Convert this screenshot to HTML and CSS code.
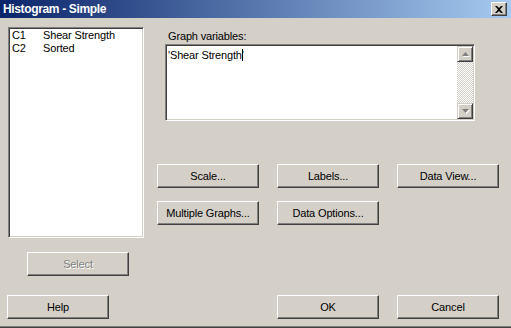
FILE: index.html
```html
<!DOCTYPE html>
<html>
    <head>
        <meta charset="utf-8">
        <title>Histogram - Simple</title>
        <link rel="stylesheet" href="styles.css">
    </head>
    <body>
        <div class="window">
            <div class="titlebar">
                <span class="title">Histogram - Simple</span>
                <span class="close">
                    <svg width="8" height="7" viewBox="0 0 8 7"><path d="M0 0h2l2 2 2-2h2L5 3.5 8 7H6L4 5 2 7H0l3-3.5z" fill="#000"/></svg>
                </span>
            </div>
            <div class="content">
                <div class="main">
                    <div class="left">
                        <div class="listbox">
                            <div class="list-row"><span class="col-id">C1</span><span>Shear Strength</span></div>
                            <div class="list-row"><span class="col-id">C2</span><span>Sorted</span></div>
                        </div>
                        <button class="btn select" disabled>Select</button>
                    </div>
                    <div class="right">
                        <div class="field-label">Graph variables:</div>
                        <div class="varbox">
                            <div class="var-text">'Shear Strength'<span class="caret"></span></div>
                            <div class="vscroll">
                                <span class="arrow"><svg width="7" height="4" viewBox="0 0 7 4"><path d="M3.5 0L7 4H0z" fill="#808080"/></svg></span>
                                <span class="track"></span>
                                <span class="arrow"><svg width="7" height="4" viewBox="0 0 7 4"><path d="M0 0h7L3.5 4z" fill="#808080"/></svg></span>
                            </div>
                        </div>
                        <div class="btn-grid">
                            <button class="btn">Scale...</button>
                            <button class="btn">Labels...</button>
                            <button class="btn">Data View...</button>
                            <button class="btn">Multiple Graphs...</button>
                            <button class="btn">Data Options...</button>
                        </div>
                    </div>
                </div>
                <div class="footer">
                    <button class="btn">Help</button>
                    <div class="footer-right">
                        <button class="btn">OK</button>
                        <button class="btn">Cancel</button>
                    </div>
                </div>
            </div>
        </div>
    </body>
</html>
```

FILE: styles.css
```css
body{margin:0; background:#d4d0c8; font-family:"Liberation Sans",Arial,sans-serif; font-size:11px; letter-spacing:-0.15px; color:#000}
.window{width:511px; height:328px; box-sizing:border-box; display:flex; flex-direction:column; background:#d4d0c8; border-bottom:1px solid #404040}
.titlebar{height:18px; flex:none; display:flex; align-items:center; justify-content:space-between; padding:0 4px 0 3px; background:linear-gradient(to right,#0a246a,#a6caf0); color:#fff; font-weight:bold; font-size:12px; letter-spacing:-0.35px}
.close{width:16px; height:14px; box-sizing:border-box; display:flex; align-items:center; justify-content:center; background:#d4d0c8; border:1px solid; border-color:#fff #404040 #404040 #fff; box-shadow:inset -1px -1px #808080}
.content{flex:1; display:flex; flex-direction:column; border-bottom:1px solid #808080}
.main{display:flex}
.left{width:157px; flex:none; box-sizing:border-box; padding-left:8px; display:flex; flex-direction:column; align-items:flex-start}
.listbox{margin-top:9px; width:136px; height:211px; box-sizing:border-box; padding:1px 2px 0; background:#fff; border:1px solid; border-color:#808080 #fff #fff #808080; box-shadow:inset 1px 1px #404040, inset -1px -1px #d4d0c8}
.list-row{display:flex; height:13px; line-height:13px; padding-left:1px}
.col-id{width:31px}
.btn{width:102px; height:24px; box-sizing:border-box; padding:0; font:inherit; letter-spacing:inherit; color:#000; background:#d4d0c8; border:1px solid; border-color:#fff #404040 #404040 #fff; box-shadow:inset -1px -1px #808080}
.btn:disabled{color:#808080; text-shadow:1px 1px 0 #fff}
.select{margin:14px 0 0 19px}
.right{flex:1; display:flex; flex-direction:column; align-items:flex-start}
.field-label{margin:12px 0 0 11px; line-height:13px}
.varbox{margin:1px 0 0 8px; width:310px; height:77px; box-sizing:border-box; display:flex; padding:1px; background:#fff; border:1px solid; border-color:#808080 #fff #fff #808080; box-shadow:inset 1px 1px #404040, inset -1px -1px #d4d0c8}
.var-text{flex:1; padding:3px 0 0 1px; line-height:13px}
.caret{display:inline-block; width:1px; height:12px; margin-left:-2px; background:#000; vertical-align:-2px}
.vscroll{width:16px; display:flex; flex-direction:column; background:conic-gradient(#fff 0 25%, #d4d0c8 0 50%, #fff 0 75%, #d4d0c8 0); background-size:2px 2px}
.arrow{width:16px; height:16px; box-sizing:border-box; display:flex; align-items:center; justify-content:center; background:#d4d0c8; border:1px solid; border-color:#d4d0c8 #404040 #404040 #d4d0c8; box-shadow:inset 1px 1px #fff, inset -1px -1px #808080}
.arrow svg{filter:drop-shadow(1px 1px 0 #fff)}
.track{flex:1}
.btn-grid{margin-top:43px; display:grid; grid-template-columns:repeat(3,102px); column-gap:18px; row-gap:13px}
.footer{margin-top:19px; display:flex; justify-content:space-between; padding:0 12px 0 7px}
.footer-right{display:flex; gap:18px}
```
